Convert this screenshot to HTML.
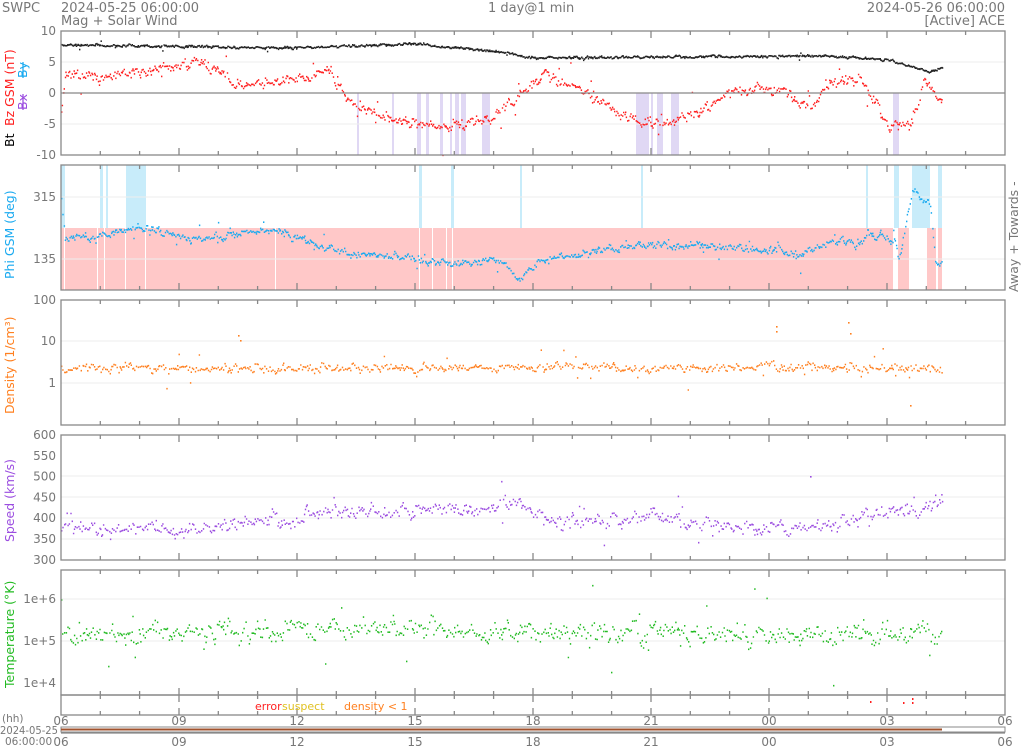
<!DOCTYPE html>
<html><head><meta charset="utf-8"><style>
html,body{margin:0;padding:0;background:#fff;width:1024px;height:748px;overflow:hidden}
svg{display:block;font-family:"DejaVu Sans","Liberation Sans",sans-serif}
</style></head><body>
<svg id="s" width="1024" height="748" viewBox="0 0 1024 748" xmlns="http://www.w3.org/2000/svg">
<g font-size="13" fill="#777">
<text x="2" y="12">SWPC</text>
<text x="61" y="12">2024-05-25 06:00:00</text>
<text x="61" y="25">Mag + Solar Wind</text>
<text x="488" y="12">1 day@1 min</text>
<text x="1005" y="12" text-anchor="end">2024-05-26 06:00:00</text>
<text x="1005" y="25" text-anchor="end">[Active] ACE</text>
</g>
<g id="bg"></g>
<g id="pts"></g>
<g id="frame" fill="none" stroke="#888" stroke-width="1.3"></g>
<g id="lab" font-size="12" fill="#777"></g>
<g font-size="12.5">
<text transform="translate(14,147) rotate(-90)" fill="#000">Bt</text>
<text transform="translate(14,126) rotate(-90)" fill="#ff2020">Bz GSM (nT)</text>
<text transform="translate(27,110) rotate(-90)" fill="#9b4de0" text-decoration="line-through">Bx</text>
<text transform="translate(27,78) rotate(-90)" fill="#1aaaf0" text-decoration="line-through">By</text>
<text transform="translate(14,279) rotate(-90)" fill="#1aaaf0">Phi GSM (deg)</text>
<text transform="translate(1018,292) rotate(-90)" fill="#777">Away +  Towards -</text>
<text transform="translate(14,414) rotate(-90)" fill="#ff8020">Density (1/cm³)</text>
<text transform="translate(14,542) rotate(-90)" fill="#9b4de0">Speed (km/s)</text>
<text transform="translate(14,688) rotate(-90)" fill="#22bb22">Temperature (°K)</text>
</g>
<g font-size="11">
<text x="255" y="710" fill="#ff2020">error</text>
<text x="282" y="710" fill="#e0c020">suspect</text>
<text x="344" y="710" fill="#ff8020">density &lt; 1</text>
</g>
<g font-size="10.5" fill="#777">
<text x="2" y="722">(hh)</text>
<text x="0" y="734" textLength="58" lengthAdjust="spacingAndGlyphs">2024-05-25</text>
<text x="5" y="745">06:00:00</text>
</g>
<rect x="61" y="727" width="944" height="5" fill="#fff" stroke="#888"/>
<line x1="61" y1="729.5" x2="942" y2="729.5" stroke="#a0522d" stroke-width="2"/>
</svg>
<script>
var NS="http://www.w3.org/2000/svg",s=document.getElementById('s');
function el(p,t,a){var e=document.createElementNS(NS,t);for(var k in a)e.setAttribute(k,a[k]);document.getElementById(p).appendChild(e);return e}
var seed=7;function r(){seed=(seed*16807)%2147483647;return seed/2147483647}
function g(){return (r()+r()+r()-1.5)*1.4}
function pw(k,x){for(var i=0;i<k.length-1;i++){if(x<=k[i+1][0]){var a=k[i],b=k[i+1];return a[1]+(b[1]-a[1])*(x-a[0])/(b[0]-a[0])}}return k[k.length-1][1]}
var panels=[[31,155],[165,290],[300,425],[435,560],[570,695],[695,715]];
var hx=[61,179,297,415,533,651,769,887,1005],hl=["06","09","12","15","18","21","00","03","06"];
el('bg','rect',{x:61,y:228,width:881,height:62,fill:"#ffc8c8"});
[[64,65],[97,98],[104,105],[125,126],[145,146],[275,276],[419,420],[432,433],[446,447],[452,453],[893,898],[909,927],[936,938]].forEach(function(a){el('bg','rect',{x:a[0],y:228,width:a[1]-a[0],height:62,fill:"#fff"})});
[[61,65],[100,103],[106,108],[126,146],[419,422],[451,454],[520,522],[641,643],[866,868],[894,899],[912,930],[938,942]].forEach(function(a){el('bg','rect',{x:a[0],y:165,width:a[1]-a[0],height:63,fill:"#c8ecfa"})});
[[357,359],[392,394],[417,421],[426,429],[440,443],[450,452],[455,459],[461,466],[482,490],[636,649],[651,653],[657,663],[671,679],[893,899]].forEach(function(a){el('bg','rect',{x:a[0],y:93,width:a[1]-a[0],height:62,fill:"#e0d8f4"})});
panels.forEach(function(p,i){
 el('frame','rect',{x:61,y:p[0],width:944,height:p[1]-p[0]});
 hx.forEach(function(x,j){if(j>0&&j<8){el('frame','line',{x1:x,y1:p[0],x2:x,y2:p[0]+7});el('frame','line',{x1:x,y1:p[1],x2:x,y2:p[1]-7})}
  for(var m=1;m<3&&j<8;m++){var xx=x+m*39.3;el('frame','line',{x1:xx,y1:p[0],x2:xx,y2:p[0]+4});el('frame','line',{x1:xx,y1:p[1],x2:xx,y2:p[1]-4})}});
});
el('frame','line',{x1:61,y1:93,x2:1005,y2:93,stroke:"#888"});
function gl(y){el('bg','line',{x1:61,y1:y,x2:1005,y2:y,stroke:"#eee"})}
[62,124,197,259,341,383,476,497,518,539,599,641].forEach(gl);
function yl(y,t){var e=el('lab','text',{x:56,y:y+4,"text-anchor":"end"});e.textContent=t}
yl(31,"10");yl(62,"5");yl(93,"0");yl(124,"-5");yl(155,"-10");yl(197,"315");yl(259,"135");
yl(300,"100");yl(341,"10");yl(383,"1");
[600,550,500,450,400,350,300].forEach(function(v,i){yl(435+i*20.8,""+v)});
yl(599,"1e+6");yl(641,"1e+5");yl(683,"1e+4");
hx.forEach(function(x,j){var e=el('lab','text',{x:x,y:725,"text-anchor":"middle"});e.textContent=hl[j];e=el('lab','text',{x:x,y:746,"text-anchor":"middle"});e.textContent=hl[j]});
el('frame','line',{x1:61,y1:733,x2:1005,y2:733});
function series(k,col,noise,sp,jump){var x=61,v=0;var d="";while(x<942){v=v*0.5+g()*noise;var y=pw(k,x)+v;if(r()<jump)y+=g()*noise*4;d+="M"+x.toFixed(1)+" "+y.toFixed(1)+"h1.4";x+=sp*(0.5+r())}
 el('pts','path',{d:d,stroke:col,"stroke-width":1.6,fill:"none"})}
series([[61,45],[290,48],[415,44],[500,52],[530,58],[820,56],[890,60],[930,72],[942,68]],"#222",0.8,0.8,0.02);
series([[61,113],[65,75],[100,78],[150,70],[200,63],[240,85],[300,80],[330,70],[350,105],[380,115],[415,125],[450,125],[490,120],[520,95],[545,75],[580,90],[630,120],[660,125],[700,110],[740,90],[780,90],[810,110],[830,80],[860,80],[890,125],[910,125],[925,80],[942,105]],"#ff2020",3.5,1.0,0.05);
series([[61,200],[65,240],[100,235],[140,228],[200,240],[270,230],[330,250],[380,255],[420,260],[460,265],[500,260],[520,282],[540,260],[600,250],[650,245],[700,245],[760,250],[800,255],[835,240],[860,245],[868,232],[895,240],[898,262],[912,190],[930,205],[935,262],[942,265]],"#1aaaf0",2.5,1.0,0.06);
series([[61,368],[942,368]],"#ff8020",3,1.3,0.05);
series([[61,528],[200,530],[280,520],[330,512],[400,512],[520,505],[540,522],[620,524],[640,515],[700,524],[760,528],[800,528],[850,520],[900,510],[942,505]],"#9b4de0",5,1.3,0.05);
series([[61,636],[300,630],[420,628],[520,634],[942,634]],"#22bb22",7,1.3,0.05);
[[238,335],[240,340],[776,326],[776,331],[848,322],[850,333],[910,405],[810,476]].forEach(function(p,i){el('pts','rect',{x:p[0],y:p[1],width:1.6,height:1.6,fill:i<7?"#ff8020":"#9b4de0"})});
[[870,701],[903,702],[912,702],[912,698]].forEach(function(p){el('pts','rect',{x:p[0],y:p[1],width:1.5,height:2,fill:"#ff2020"})});
</script>
</body></html>
